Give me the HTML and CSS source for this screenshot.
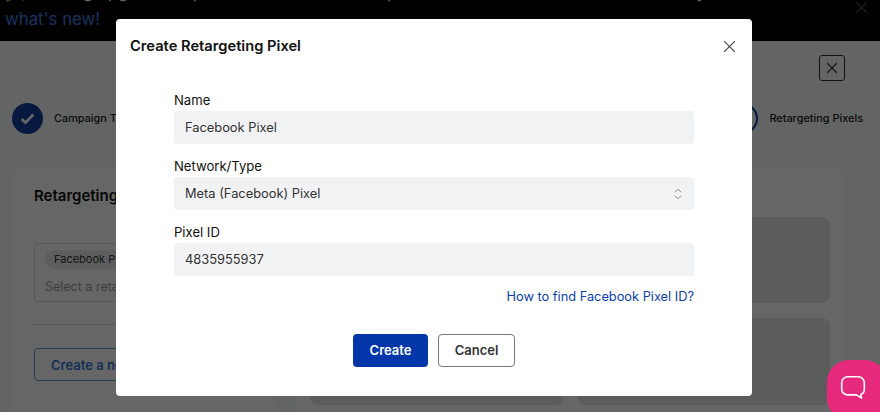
FILE: index.html
```html
<!DOCTYPE html>
<html lang="en">
<head>
<meta charset="utf-8">
<title>Create Retargeting Pixel</title>
<link rel="stylesheet" href="styles.css">
</head>
<body>
<div class="page">
  <div class="banner">
    <p class="banner-text">🎉 Exciting upgrade! Explore enhanced link setup with domains and more features today. <a class="banner-link">Check out<br>what's new!</a></p>
    <svg class="banner-close" viewBox="0 0 12 12"><path d="M1 1l10 10M11 1L1 11"/></svg>
  </div>
  <div class="top-row">
    <span class="close-box"><svg viewBox="0 0 12 12"><path d="M1 1l10 10M11 1L1 11"/></svg></span>
  </div>
  <div class="steps">
    <div class="step">
      <span class="step-done"><svg viewBox="0 0 16 16"><path d="M2.500 8.500l3.600 3.400 7.400-7.600"/></svg></span>
      <span>Campaign Type</span>
    </div>
    <div class="step">
      <span class="step-open"></span>
      <span>Retargeting Pixels</span>
    </div>
  </div>
  <div class="content">
    <section class="card">
      <h2 class="card-title">Retargeting Pixels</h2>
      <div class="picker">
        <span class="chip">Facebook Pixel</span>
        <span class="placeholder">Select a retargeting pixel</span>
      </div>
      <hr class="rule">
      <button class="new-btn">Create a new pixel</button>
    </section>
    <section class="preview">
      <div class="tiles"><div class="tile"></div><div class="tile"></div></div>
      <div class="tiles tiles-b"><div class="tile"></div><div class="tile"></div></div>
    </section>
  </div>
</div>
<div class="overlay"></div>
<div class="modal">
  <div class="modal-head">
    <h1 class="modal-title">Create Retargeting Pixel</h1>
    <svg class="modal-x" viewBox="0 0 12 12"><path d="M1 1l10 10M11 1L1 11"/></svg>
  </div>
  <form class="form">
    <div class="field">
      <label class="label">Name</label>
      <div class="input">Facebook Pixel</div>
    </div>
    <div class="field">
      <label class="label">Network/Type</label>
      <div class="input select">
        <span>Meta (Facebook) Pixel</span>
        <svg class="updown" viewBox="0 0 8 12"><path d="M1 4.200l3-3 3 3M1 7.800l3 3 3-3"/></svg>
      </div>
    </div>
    <div class="field">
      <label class="label">Pixel ID</label>
      <div class="input">4835955937</div>
    </div>
    <a class="help">How to find Facebook Pixel ID?</a>
  </form>
  <div class="actions">
    <button type="button" class="btn btn-primary">Create</button>
    <button type="button" class="btn btn-outline">Cancel</button>
  </div>
</div>
<div class="chat">
  <svg viewBox="0 0 26 26"><path d="M8 3.500h10a5.500 5.500 0 0 1 5.500 5.500v6a5.500 5.500 0 0 1-3.200 5l.6 3.300-4.600-3H8A5.500 5.500 0 0 1 2.500 14.800V9A5.500 5.500 0 0 1 8 3.500z"/></svg>
</div>
</body>
</html>
```

FILE: styles.css
```css
* { box-sizing: border-box; }
html, body { margin: 0; height: 412px; overflow: hidden; }
body { font-family: Inter, "Liberation Sans", sans-serif; background: #fff; color: #1a1a1a; position: relative; }

.page { height: 412px; overflow: hidden; display: flex; flex-direction: column; background: #f8f9fa; }
.banner { height: 41px; flex: none; background: #000; color: #fff; position: relative; overflow: hidden; }
.banner-text { margin: -21px 0 0; padding: 0 5px; font-size: 16.800px; line-height: 27px; white-space: nowrap; }
.banner-link { color: #3a80e8; }
.banner-close { position: absolute; left: 855px; top: 1px; width: 13px; height: 13px; fill: none; stroke: #555; stroke-width: 1.100; }

.top-row { display: flex; justify-content: flex-end; padding: 14px 35px 0 0; }
.close-box { width: 26px; height: 26px; border: 1px solid #333; border-radius: 3px; display: flex; align-items: center; justify-content: center; }
.close-box svg { width: 12px; height: 12px; fill: none; stroke: #333; stroke-width: 1.100; }

.steps { display: flex; justify-content: space-between; align-items: center; padding: 14px 17px 0 12px; height: 60px; flex: none; font-size: 10.900px; font-weight: 500; color: #222; }
.step { display: flex; align-items: center; gap: 11px; }
.step-done { width: 31px; height: 31px; border-radius: 50%; background: #14409f; display: flex; align-items: center; justify-content: center; }
.step-done svg { width: 17px; height: 17px; fill: none; stroke: #fff; stroke-width: 2.600; }
.step-open { width: 31px; height: 31px; border-radius: 50%; border: 2px solid #14409f; }

.content { display: flex; gap: 19px; padding: 29px 35px 0 12px; flex: 1; min-height: 0; }
.card { width: 265px; flex: none; height: 300px; background: #fff; border-radius: 8px; padding: 16px 22px 0; }
.card-title { margin: 0 0 37px; font-size: 15px; line-height: 20px; font-weight: 600; color: #111; }
.picker { border: 1px solid #ddd; border-radius: 4px; height: 59px; padding: 3px 10px; }
.chip { display: inline-block; background: #e8ecee; border-radius: 12px; padding: 0 9px; line-height: 19px; font-size: 11px; color: #333; }
.placeholder { display: block; margin-top: 8px; font-size: 12.500px; line-height: 20px; color: #999; }
.rule { margin: 22px 0 23px; border: 0; border-top: 1px solid #ddd; }
.new-btn { display: block; width: 240px; height: 33px; border: 1px solid #5f98d8; border-radius: 4px; background: transparent; color: #2f78d8; font: 600 13px Inter, sans-serif; text-align: left; padding: 0 16px; }

.preview { flex: 1; background: #fff; border-radius: 8px; height: 300px; padding: 47px 15px 0 14px; display: flex; flex-direction: column; gap: 15px; }
.tiles { display: flex; gap: 15px; }
.tile { flex: 1; background: #e4e5e7; border-radius: 8px; height: 86px; }
.tiles-b .tile { height: 87px; }

.overlay { position: absolute; inset: 0; background: rgba(0, 0, 0, .6); }

.modal { position: absolute; left: 116px; top: 19px; width: 636px; height: 377px; background: #fff; border-radius: 4px; }
.modal-head { display: flex; justify-content: space-between; align-items: center; padding: 0 16px 0 14px; height: 54px; }
.modal-title { margin: 0; font-size: 14.700px; line-height: 20px; font-weight: 600; color: #111; }
.modal-x { width: 13px; height: 13px; fill: none; stroke: #444; stroke-width: 1.100; }
.form { width: 520px; margin-left: 58px; padding-top: 18px; display: flex; flex-direction: column; gap: 13px; }
.field { display: flex; flex-direction: column; gap: 2px; }
.label { font-size: 13.100px; line-height: 18px; font-weight: 400; color: #111; }
.input { height: 33px; background: #f1f2f4; border-radius: 4px; padding: 0 11px; font-size: 12.850px; line-height: 33px; color: #333; }
.select { display: flex; justify-content: space-between; align-items: center; padding-right: 12px; }
.updown { width: 8px; height: 12px; fill: none; stroke: #888; stroke-width: 1; }
.help { align-self: flex-end; margin-top: -1px; font-size: 12.800px; line-height: 18px; color: #0b3fa8; }
.actions { display: flex; justify-content: center; gap: 10px; margin-top: 28px; }
.btn { height: 33px; border-radius: 4px; font: 600 13px Inter, sans-serif; padding: 0 0 1px; }
.btn-primary { width: 75px; background: #0336a8; border: 0; color: #fff; }
.btn-outline { width: 77px; background: #fff; border: 1px solid #777; color: #333; }

.chat { position: absolute; left: 827px; top: 360px; width: 60px; height: 60px; background: #e6297c; border-radius: 22px; display: flex; align-items: center; justify-content: center; padding: 0 8px 6px 0; }
.chat svg { width: 28px; height: 28px; fill: none; stroke: #fff; stroke-width: 1.500; stroke-linejoin: round; }
```
